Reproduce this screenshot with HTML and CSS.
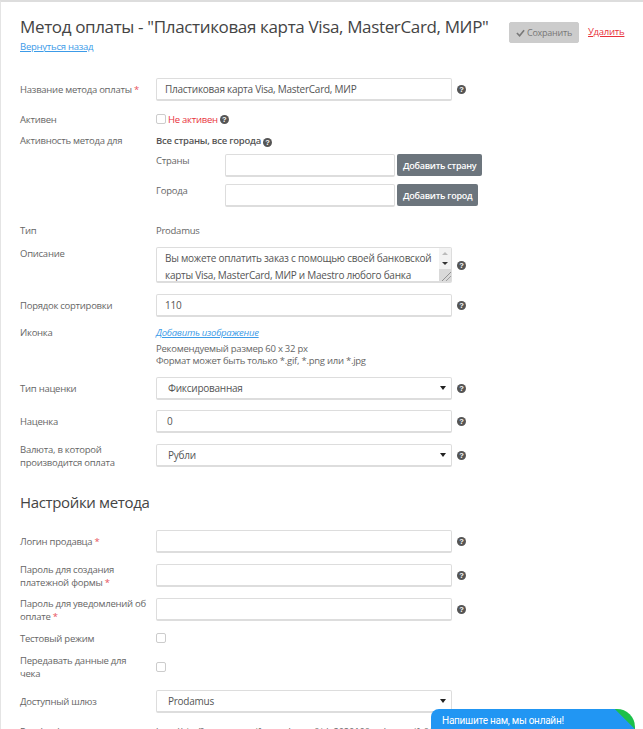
FILE: index.html
```html
<!DOCTYPE html>
<html lang="en">

<head>
    <meta charset="UTF-8">
    <title>Метод оплаты</title>
    <link rel="stylesheet" href="styles.css">
</head>

<body>
    <div class="page">
        <div class="head">
            <div class="head-title">
                <h1>Метод оплаты - "Пластиковая карта Visa, MasterCard, МИР"</h1>
                <a class="back" href="#">Вернуться назад</a>
            </div>
            <button class="btn-save" type="button">
                <svg width="9" height="8" viewBox="0 0 10 8"><path d="M1 4l3 3 5-6" fill="none" stroke="#777" stroke-width="1.8"/></svg>
                Сохранить
            </button>
            <a class="delete" href="#">Удалить</a>
        </div>

        <div class="row">
            <label>Название метода оплаты <span class="req">*</span></label>
            <input type="text" value="Пластиковая карта Visa, MasterCard, МИР">
            <span class="help">?</span>
        </div>
        <div class="row row-short">
            <label>Активен</label>
            <span class="check"></span>
            <span class="off">Не активен</span>
            <span class="help help-near">?</span>
        </div>
        <div class="row row-geo">
            <label>Активность метода для</label>
            <div class="geo">
                <div class="geo-title">Все страны, все города <span class="help help-title">?</span></div>
                <div class="geo-line">
                    <span class="geo-label">Страны</span>
                    <input type="text">
                    <button class="btn-add" type="button">Добавить страну</button>
                </div>
                <div class="geo-line">
                    <span class="geo-label">Города</span>
                    <input type="text">
                    <button class="btn-add" type="button">Добавить город</button>
                </div>
            </div>
        </div>
        <div class="row row-type">
            <label>Тип</label>
            <span class="value">Prodamus</span>
        </div>
        <div class="row row-desc">
            <label>Описание</label>
            <div class="desc-box">
                <textarea>Вы можете оплатить заказ с помощью своей банковской карты Visa, MasterCard, МИР и Maestro любого банка
через защищенный платежный сервис, без комиссии</textarea>
                <div class="scrollbar">
                    <span class="arrow-up"></span>
                    <span class="arrow-down"></span>
                    <span class="grip"></span>
                </div>
            </div>
            <span class="help">?</span>
        </div>
        <div class="row">
            <label>Порядок сортировки</label>
            <input type="text" value="110">
            <span class="help">?</span>
        </div>
        <div class="row row-icon">
            <label>Иконка</label>
            <div class="icon-info">
                <a href="#">Добавить изображение</a>
                <p>Рекомендуемый размер 60 x 32 px<br>Формат может быть только *.gif, *.png или *.jpg</p>
            </div>
        </div>
        <div class="row row-markup">
            <label>Тип наценки</label>
            <div class="select">Фиксированная</div>
            <span class="help">?</span>
        </div>
        <div class="row">
            <label>Наценка</label>
            <input class="input-tight" type="text" value="0">
            <span class="help">?</span>
        </div>
        <div class="row">
            <label>Валюта, в которой производится оплата</label>
            <div class="select">Рубли</div>
            <span class="help">?</span>
        </div>

        <h2>Настройки метода</h2>

        <div class="row">
            <label>Логин продавца <span class="req">*</span></label>
            <input type="text">
            <span class="help">?</span>
        </div>
        <div class="row">
            <label>Пароль для создания платежной формы <span class="req">*</span></label>
            <input type="text">
            <span class="help">?</span>
        </div>
        <div class="row row-pass">
            <label>Пароль для уведомлений об оплате <span class="req">*</span></label>
            <input type="text">
            <span class="help">?</span>
        </div>
        <div class="row row-test">
            <label>Тестовый режим</label>
            <span class="check"></span>
        </div>
        <div class="row row-receipt">
            <label>Передавать данные для чека</label>
            <span class="check"></span>
        </div>
        <div class="row">
            <label>Доступный шлюз</label>
            <div class="select">Prodamus</div>
        </div>
        <div class="row row-last">
            <label>Result url</label>
            <span class="value">http://site/?paymentnotify=prodamus&amp;id=202010&amp;order=notify&amp;key=a1b2c3d4e5</span>
        </div>
    </div>

    <div class="chat">Напишите нам, мы онлайн!</div>
</body>
</html>
```

FILE: styles.css
```css
html, body {
    height: 729px;
    overflow: hidden;
}

body {
    margin: 0;
    font-family: "Open Sans", Arial, sans-serif;
    font-size: 9.5px;
    letter-spacing: -0.25px;
    color: #666;
    background: #fff;
}

.page {
    border-top: 2px solid #ddd;
    border-left: 1px solid #e4e4e4;
    padding: 0 0 0 19px;
    box-sizing: border-box;
    height: 729px;
    overflow: hidden;
}

.head {
    display: flex;
    align-items: flex-start;
    height: 76px;
}

.head-title {
    width: 489px;
    flex: none;
}

h1 {
    margin: 13px 0 0;
    font-size: 17px;
    font-weight: 400;
    letter-spacing: -0.35px;
    line-height: 24px;
    color: #444;
    white-space: nowrap;
}

.back {
    display: block;
    margin-top: 1px;
    color: #3c9be8;
    line-height: 14px;
}

.btn-save {
    display: flex;
    align-items: center;
    justify-content: center;
    gap: 2px;
    width: 70px;
    height: 21px;
    margin-top: 20px;
    padding: 0;
    border: 1px solid #ccc;
    border-radius: 2px;
    background: #ccc;
    color: #777;
    font: 9px "Open Sans", Arial, sans-serif;
    letter-spacing: -0.25px;
}

.delete {
    margin: 23px 0 0 9px;
    color: #e8323c;
    line-height: 14px;
}

.row {
    display: flex;
    align-items: center;
    min-height: 23px;
    margin-bottom: 11px;
}

.row label {
    flex: none;
    box-sizing: border-box;
    width: 136px;
    margin: -4px 0;
    padding-right: 8px;
    line-height: 13px;
}

.req {
    color: #e8525c;
}

input[type="text"], textarea, .select {
    box-sizing: border-box;
    width: 296px;
    height: 23px;
    margin: 0;
    padding: 0 8px;
    border: 1px solid #ddd;
    border-bottom-width: 2px;
    border-radius: 2px;
    background: #fff;
    font: 10px "Open Sans", Arial, sans-serif;
    letter-spacing: -0.25px;
    color: #555;
    outline: none;
}

.help {
    display: inline-block;
    flex: none;
    width: 9px;
    height: 9px;
    margin-left: 5px;
    border-radius: 50%;
    background: #555;
    color: #fff;
    font: bold 7.5px/9px "Liberation Sans", Arial, sans-serif;
    letter-spacing: 0;
    text-align: center;
    vertical-align: -1px;
}

.check {
    display: inline-block;
    flex: none;
    box-sizing: border-box;
    width: 10px;
    height: 10px;
    border: 1px solid #ccc;
    border-radius: 2px;
    background: #fff;
}

.row-short {
    min-height: 14px;
    height: 14px;
    margin-bottom: 8px;
}

.off {
    margin-left: 2px;
    color: #e8323c;
}

.help-near {
    margin-left: 2px;
}

.help-title {
    margin-left: 0;
}

.row-geo {
    align-items: flex-start;
    margin-bottom: 9px;
}

.row-geo label {
    margin: 0;
}

.geo-title {
    font-weight: 600;
    color: #555;
    line-height: 14px;
    margin-bottom: 6px;
}

.geo-line {
    display: flex;
    align-items: flex-start;
    margin-bottom: 7px;
    height: 23px;
}

.geo-label {
    flex: none;
    width: 69px;
    line-height: 14px;
}

.geo-line input[type="text"] {
    width: 170px;
}

.btn-add {
    height: 22px;
    margin-left: 2px;
    padding: 0 6px;
    border: 0;
    border-radius: 2px;
    background: #6c757d;
    color: #fff;
    font: 600 9px "Open Sans", Arial, sans-serif;
    letter-spacing: -0.25px;
}

.row-type {
    min-height: 14px;
    margin-bottom: 10px;
}

.row-desc {
    align-items: flex-start;
}

.row-desc label {
    margin: 0;
}

.desc-box {
    position: relative;
    flex: none;
    height: 36px;
}

.desc-box textarea {
    display: block;
    height: 36px;
    padding: 2px 12px 0 8px;
    line-height: 17px;
    overflow: hidden;
    resize: none;
}

/* scrollbars are not drawn in the shot, so this one is plain markup */
.scrollbar {
    position: absolute;
    top: 1px;
    right: 1px;
    bottom: 2px;
    display: flex;
    flex-direction: column;
    align-items: center;
    width: 12px;
    background: #f2f2f2;
}

.arrow-up {
    margin-top: 4px;
    border: 3px solid transparent;
    border-top: 0;
    border-bottom: 3px solid #bbb;
}

.arrow-down {
    margin-top: 7px;
    border: 3px solid transparent;
    border-bottom: 0;
    border-top: 3px solid #333;
}

.grip {
    flex: 1;
    align-self: stretch;
    margin-top: 4px;
    background: linear-gradient(135deg, #d9d9d9 60%, #888 62%, #d9d9d9 66%, #d9d9d9 76%, #888 78%, #d9d9d9 82%);
}

.row-desc .help {
    margin-top: 14px;
}

.row-icon {
    align-items: flex-start;
    margin: -2px 0 10px;
}

.row-icon label {
    margin: 0;
}

.icon-info a {
    color: #3c9be8;
    font-style: italic;
    line-height: 14px;
}

.icon-info p {
    margin: 3px 0 0;
    line-height: 12px;
}

.select {
    position: relative;
    display: flex;
    align-items: center;
    padding-left: 11px;
}

.select::after {
    content: "";
    position: absolute;
    right: 5px;
    top: 8px;
    border: 3px solid transparent;
    border-top: 4px solid #222;
    border-bottom: 0;
}

.row-markup {
    margin-bottom: 10px;
}

.input-tight {
    padding-left: 10px !important;
}

h2 {
    margin: 24px 0 17px;
    font-size: 15px;
    font-weight: 400;
    letter-spacing: -0.35px;
    line-height: 22px;
    color: #444;
}

.row-pass {
    margin-bottom: 10px;
}

.row-test {
    min-height: 14px;
    margin-bottom: 7px;
}

.row-receipt {
    min-height: 30px;
    margin-bottom: 8px;
}

.row-last {
    min-height: 14px;
    white-space: nowrap;
}

.chat {
    position: absolute;
    left: 431px;
    top: 709px;
    width: 204px;
    height: 20px;
    box-sizing: border-box;
    padding: 5px 11px 0;
    border-radius: 8px 18px 0 0;
    background: linear-gradient(225deg, #1cc04a 14px, #2196f3 14.5px);
    color: #fff;
    font: 10px "Roboto", Arial, sans-serif;
    line-height: 14px;
}
```
